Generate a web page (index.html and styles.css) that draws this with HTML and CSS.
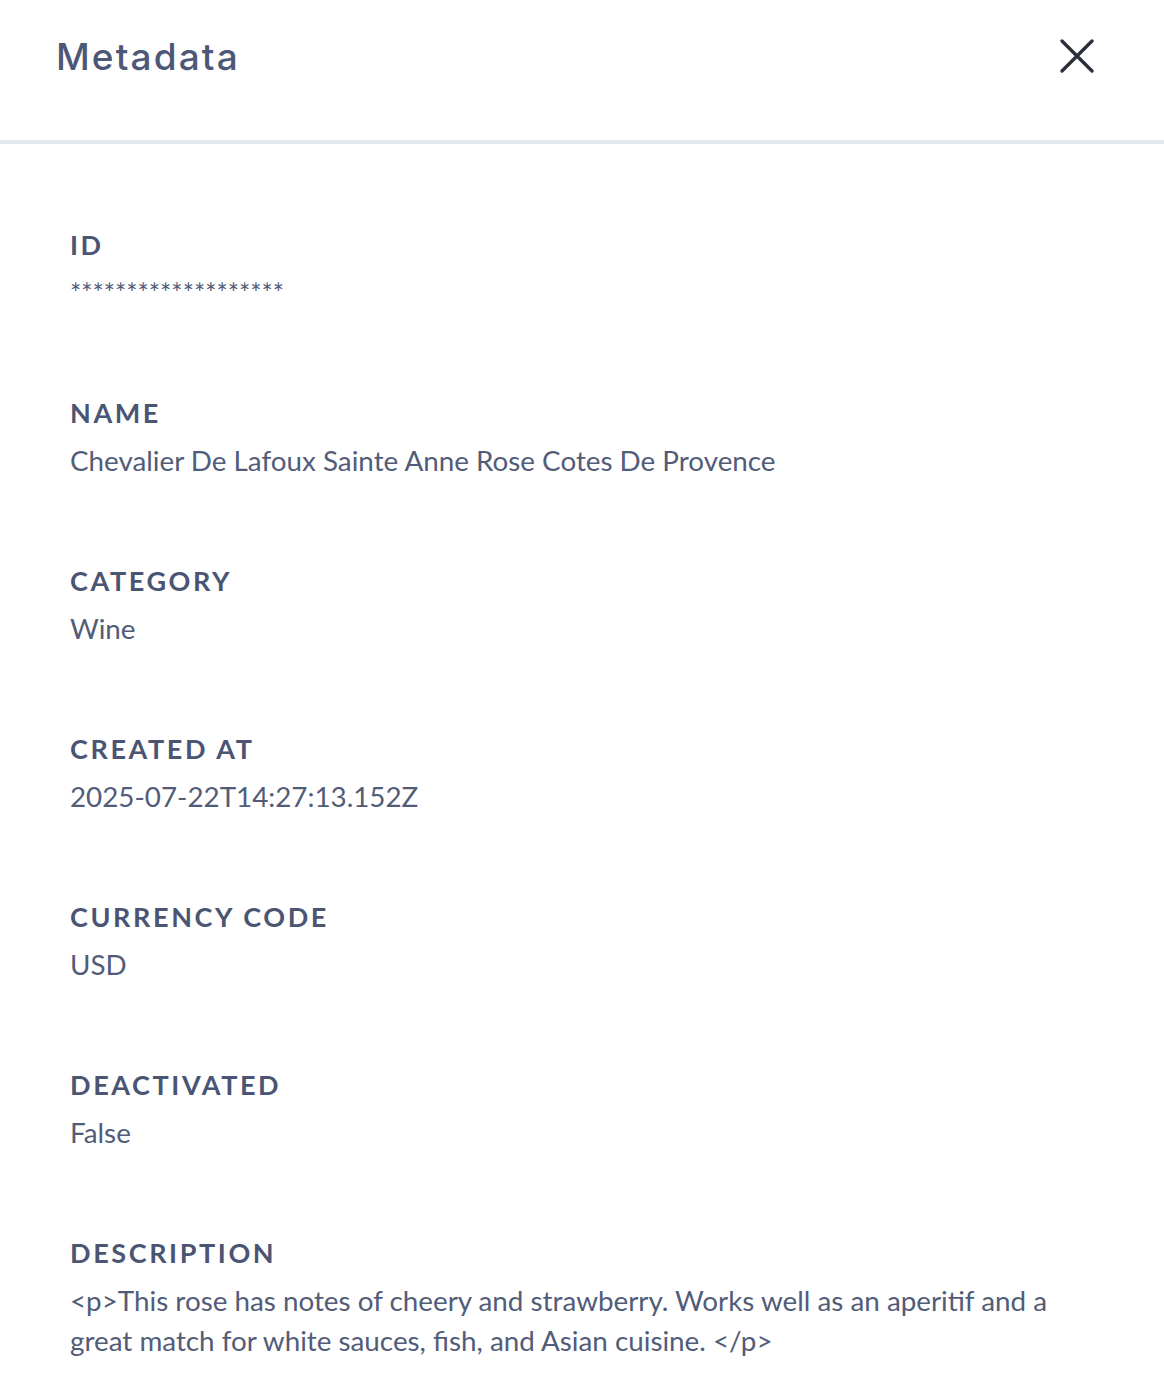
FILE: index.html
```html
<!DOCTYPE html>
<html>
<head>
<meta charset="utf-8">
<link rel="stylesheet" href="styles.css">
</head>
<body>
<div class="panel">
  <header class="header">
    <h1 class="title">Metadata</h1>
    <button class="close" aria-label="Close">
      <svg width="34" height="34" viewBox="0 0 34 34"><path d="M2 2 L32 32 M32 2 L2 32" stroke="#2b2e3b" stroke-width="3.3" stroke-linecap="round" fill="none"/></svg>
    </button>
  </header>
  <main class="content">
    <section class="field"><div class="label">ID</div><div class="value value-secret">*******************</div></section>
    <section class="field"><div class="label">NAME</div><div class="value">Chevalier De Lafoux Sainte Anne Rose Cotes De Provence</div></section>
    <section class="field"><div class="label">CATEGORY</div><div class="value">Wine</div></section>
    <section class="field"><div class="label">CREATED AT</div><div class="value">2025-07-22T14:27:13.152Z</div></section>
    <section class="field"><div class="label">CURRENCY CODE</div><div class="value">USD</div></section>
    <section class="field"><div class="label">DEACTIVATED</div><div class="value">False</div></section>
    <section class="field"><div class="label">DESCRIPTION</div><div class="value">&lt;p&gt;This rose has notes of cheery and strawberry. Works well as an aperitif and a great match for white sauces, fish, and Asian cuisine. &lt;/p&gt;</div></section>
  </main>
</div>
</body>
</html>
```
FILE: styles.css
```css
* { box-sizing: border-box; }
html, body { margin: 0; padding: 0; background: #ffffff; }
body { font-family: "Lato", "Liberation Sans", sans-serif; }
.panel { width: 1164px; }
.header {
  height: 144px;
  border-bottom: 4px solid #e4e9ee;
  display: flex;
  align-items: center;
  justify-content: space-between;
  padding: 0 70px 28px 56px;
}
.title {
  margin: 0;
  font-family: "Inter", "Open Sans", sans-serif;
  font-weight: 500;
  font-size: 37px;
  letter-spacing: 2.1px;
  color: #4d5877;
}
.close {
  border: 0;
  background: none;
  padding: 0;
  width: 34px;
  height: 34px;
  display: flex;
}
.content {
  padding: 83px 70px 40px 70px;
  display: flex;
  flex-direction: column;
  gap: 82px;
}
.field { display: flex; flex-direction: column; gap: 10px; }
.label {
  font-weight: 700;
  font-size: 27px;
  line-height: 36px;
  letter-spacing: 2.6px;
  color: #4a5573;
}
.value {
  font-size: 27.8px;
  line-height: 40px;
  color: #525c78;
  max-width: 1000px;
}
.value-secret { font-size: 26.5px; }
```
